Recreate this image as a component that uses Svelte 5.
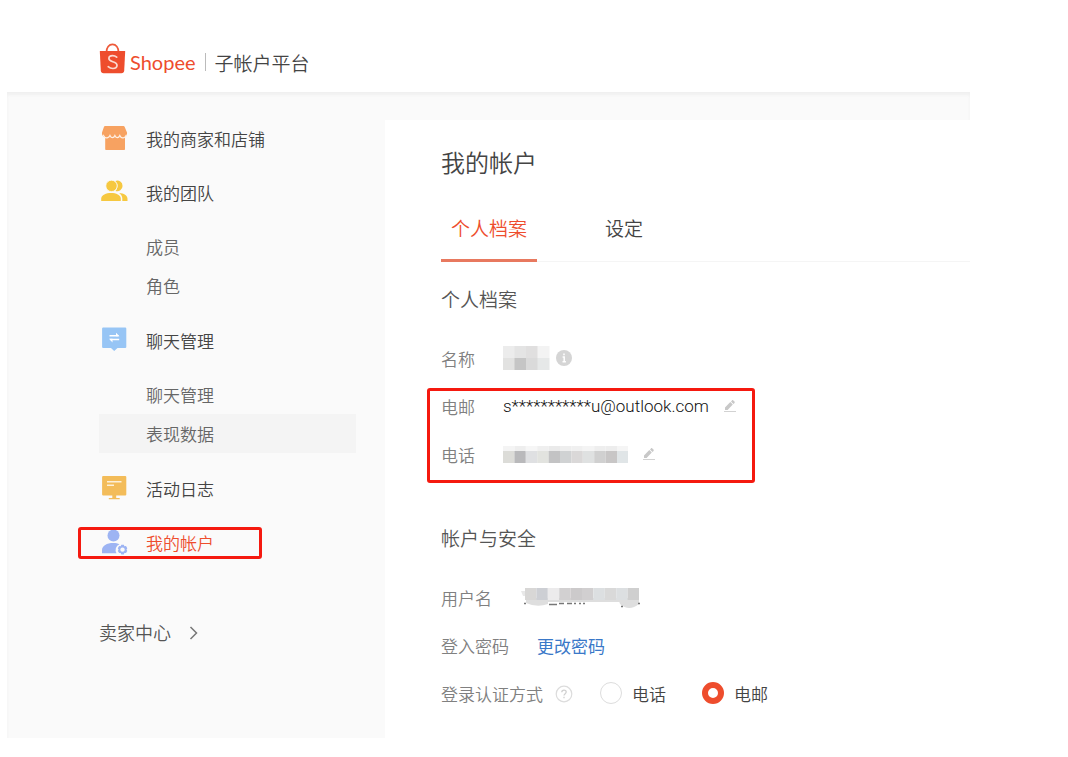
<script>
  const nav = [
    { label: '我的商家和店铺', icon: 'store', subs: [] },
    { label: '我的团队', icon: 'team', subs: [{ label: '成员' }, { label: '角色' }] },
    { label: '聊天管理', icon: 'chat', subs: [{ label: '聊天管理' }, { label: '表现数据', hover: true }] },
    { label: '活动日志', icon: 'log', subs: [] },
    { label: '我的帐户', icon: 'account', active: true, subs: [] },
  ];

  const nameMask = [
    ['#ececec', '#e4e4e4', '#e0dfdf', '#f3f3f3'],
    ['#e2e2e1', '#c5c5c5', '#dadada', '#e6e8e8'],
  ];
  const phoneTop = ['#f4f4f4', '#eeeeee', '#f6f6f6', '#efefef', '#eaeaea', '#eeeeee', '#f0f0f0', '#f4f4f4', '#eeeeee', '#ededed', '#f5f5f5'];
  const phoneRow = ['#dcdcd8', '#b9b9bb', '#dfe0e2', '#e2e3df', '#c3c3c4', '#d0d2d3', '#dad8d8', '#dfe1e1', '#d0d0d0', '#c8c6c6', '#e0e5e7'];
  const userRow = ['#d8d7d6', '#cdcfd4', '#ecebec', '#d2d0d1', '#cccacb', '#d1cfd0', '#dcdfe1', '#d9d9d9', '#dcdfe1', '#cfcfcf'];

  let tab = $state('profile');
  let method = $state('email');
</script>

{#snippet pencil()}
  <svg width="14" height="14" viewBox="0 0 14 14" aria-hidden="true">
    <path d="M2 11V8.400L7.300 3.100l2.500 2.500L4.600 11zM8 2.400l1-1c.4-.4.9-.4 1.300 0l1.200 1.200c.4.4.4.9 0 1.300l-1 1z" fill="#c8c8c8" />
    <path d="M1 12.500h12" stroke="#d2d2d2" stroke-width="1" />
  </svg>
{/snippet}

<div class="page">
  <header>
    <svg class="bag" width="27" height="31" viewBox="0 0 27 31" aria-hidden="true">
      <path d="M7.500 9C7.500 4.500 10 1.300 13.500 1.300S19.500 4.500 19.500 9" fill="none" stroke="#ee5a3a" stroke-width="1.700" />
      <path d="M.8 8h25.400L25.200 27.600q-.2 2.600-2.800 2.600H4.600Q2 30.200 1.800 27.600z" fill="#ee4d2d" />
      <path d="M17.700 14.200c-1.200-1-2.600-1.500-4.100-1.500-2.200 0-3.700 1.100-3.700 2.800 0 4 8.100 2.400 8.100 6.800 0 2-1.700 3.200-4.100 3.200-1.900 0-3.500-.7-4.700-1.800" fill="none" stroke="#fbd9d0" stroke-width="1.700" stroke-linecap="round" />
    </svg>
    <span class="brand">Shopee</span>
    <span class="bar"></span>
    <span class="platform">子帐户平台</span>
  </header>

  <div class="body">
    <nav>
      {#each nav as item}
        <div class="group">
          <a href="#top" class="item" class:active={item.active}>
            <span class="icon">
              {#if item.icon === 'store'}
                <svg width="28" height="28" viewBox="0 0 28 28">
                  <path d="M5 2h18.500q.8 0 1.200.9L27 8.600q.4 3.800-2 4.200v12.400q0 .8-.8.8H6q-.8 0-.8-.8V13Q1.400 12.500 2 8.600L4 2.800Q4.300 2 5 2z" fill="#f7a261" />
                  <path d="M3 10.800q1.900 3.600 4.200 3.100 2-.4 2.800-2.400 1 2.200 2.500 2.200t2.400-2.200q1 2.200 2.500 2.200t2.400-2.200q.9 2.300 2.800 2.400 2.400.2 4-3.100" fill="none" stroke="#fef0e5" stroke-width="1.200" />
                </svg>
              {:else if item.icon === 'team'}
                <svg width="28" height="28" viewBox="0 0 28 28" fill="#f6c840">
                  <path d="M15.500 2.900a5.300 5.300 0 1 1 0 10 8 8 0 0 0 0-10zM19.200 14.900c4.600.2 8.300 2.400 8.300 5.800v2.300h-5.200v-2.500c0-2.300-1.200-4.200-3.100-5.600z" />
                  <circle cx="11.500" cy="7.900" r="5.700" stroke="#fafafa" stroke-width=".8" />
                  <path d="M1.200 23v-2.500c0-3.600 5-5.600 9.900-5.600s9.700 2 9.700 5.600V23z" />
                </svg>
              {:else if item.icon === 'chat'}
                <svg width="28" height="28" viewBox="0 0 28 28">
                  <path d="M3.200 1.500h22q1.100 0 1.100 1.100v18.300q0 1.100-1.100 1.100H17.500L14.200 25 11 22H3.200q-1.100 0-1.100-1.100V2.600q0-1.100 1.100-1.100z" fill="#97c5f5" />
                  <path d="M9.500 9.700h9M19.200 13.500h-9" stroke="#fff" stroke-width="1.400" />
                  <path d="M16 6.800l3.500 3.500H16zM12.500 12.800v3.600L9 12.800z" fill="#fff" />
                </svg>
              {:else if item.icon === 'log'}
                <svg width="28" height="28" viewBox="0 0 28 28">
                  <path d="M3.200 2h22q1.100 0 1.100 1.100v17.300q0 1.100-1.100 1.100h-9V24h3.500v1.300H8.800V24h3.500v-2.500H3.200q-1.100 0-1.100-1.100V3.100Q2.100 2 3.200 2z" fill="#f3bc59" />
                  <path d="M7 7.700h14.500M7 11.300h7" stroke="#fdf0d8" stroke-width="1.400" />
                </svg>
              {:else}
                <svg width="28" height="28" viewBox="0 0 28 28" fill="#9db4f3">
                  <circle cx="13.500" cy="7.500" r="6" />
                  <path d="M2 25.300v-3c0-4.500 4.800-7.200 11.300-7.200 2.400 0 4.500.4 6.200 1.100a6.300 6.300 0 0 0-3 9.100z" />
                  <path fill-rule="evenodd" d="M21.300 16.800h2.500l.6 1.500 1.600-.2 1.300 2.100-.8 1.400.8 1.400-1.300 2.100-1.600-.2-.6 1.500h-2.500l-.6-1.500-1.600.2-1.300-2.100.8-1.400-.8-1.400 1.300-2.100 1.600.2zm1.200 2.600a2.200 2.200 0 1 0 .01 0z" />
                </svg>
              {/if}
            </span>
            {item.label}
          </a>
          {#if item.subs.length}
            <div class="subs">
              {#each item.subs as sub}
                <a href="#top" class="sub" class:hover={sub.hover}>{sub.label}</a>
              {/each}
            </div>
          {/if}
        </div>
      {/each}
      <a href="#top" class="seller">
        卖家中心
        <svg width="10" height="16" viewBox="0 0 10 16" aria-hidden="true"><path d="M1.500 3l6 6-6 6" fill="none" stroke="#777" stroke-width="1.500" /></svg>
      </a>
    </nav>

    <main>
      <h1>我的帐户</h1>
      <div class="tabs" role="tablist">
        <button role="tab" aria-selected={tab === 'profile'} class:on={tab === 'profile'} onclick={() => (tab = 'profile')}>个人档案</button>
        <button role="tab" aria-selected={tab === 'settings'} class:on={tab === 'settings'} onclick={() => (tab = 'settings')}>设定</button>
      </div>

      <h2>个人档案</h2>
      <div class="row">
        <span class="label">名称</span>
        <svg width="47" height="24" viewBox="0 0 47 24" aria-hidden="true">
          {#each nameMask as line, r}
            {#each line as c, i}<rect x={i * 11.5} y={r * 12} width="12" height="12" fill={c} />{/each}
          {/each}
        </svg>
        <svg class="info" width="16" height="16" viewBox="0 0 16 16" aria-hidden="true">
          <circle cx="8" cy="8" r="8" fill="#d5d5d5" />
          <path d="M8 3.500v1.800M6.600 7H8.200v4.500M6.500 11.700h3.400" fill="none" stroke="#fff" stroke-width="1.500" />
        </svg>
      </div>
      <div class="marked">
        <div class="row">
          <span class="label">电邮</span>
          <span class="value">s***********u@outlook.com</span>
          <button class="edit" aria-label="电邮">{@render pencil()}</button>
        </div>
        <div class="row">
          <span class="label">电话</span>
          <svg width="125" height="17" viewBox="0 0 125 17" aria-hidden="true">
            {#each phoneRow as c, i}
              <rect x={i * 11.4} y="0" width="11.4" height="6" fill={phoneTop[i]} />
              <rect x={i * 11.4} y="5" width="11.4" height="12" fill={c} />
            {/each}
          </svg>
          <button class="edit" aria-label="电话">{@render pencil()}</button>
        </div>
      </div>

      <h2 class="second">帐户与安全</h2>
      <div class="row">
        <span class="label">用户名</span>
        <svg width="122" height="22" viewBox="0 0 122 22" aria-hidden="true">
          <path d="M1 5h4v5H3z" fill="#e8e8e8" />
          <path d="M6 12h22v6q-11 4-22-1zM28 12h72v4H28zM98 12h21v6q-10 8-19 0z" fill="#dedede" />
          {#each userRow as c, i}<rect x={5 + i * 11.4} y="2" width="11.4" height="12" fill={c} />{/each}
          <path d="M4 17.500h2M29 18.500h8M39 17.500h5M47 17.500h5M54 17.500h2M59 17.500h2M63 17.500h2M101 20.500h2M118 17.500h2" stroke="#777" stroke-width="1.300" />
        </svg>
      </div>
      <div class="row">
        <span class="label">登入密码</span>
        <a href="#top" class="link">更改密码</a>
      </div>
      <div class="row" role="radiogroup" aria-labelledby="method-label">
        <span class="label" id="method-label">登录认证方式</span>
        <svg class="help" width="18" height="18" viewBox="0 0 18 18" aria-hidden="true">
          <circle cx="9" cy="9" r="7.800" fill="none" stroke="#dcdcdc" stroke-width="1.200" />
          <path d="M6.800 7.300c0-1.400 1-2.200 2.200-2.200s2.200.8 2.200 2c0 1.500-2.200 1.700-2.200 3.500M9 11.800v1.500" fill="none" stroke="#d0d0d0" stroke-width="1.300" />
        </svg>
        <label class="radio"><input type="radio" name="method" value="phone" bind:group={method} />电话</label>
        <label class="radio"><input type="radio" name="method" value="email" bind:group={method} />电邮</label>
      </div>
    </main>
  </div>
</div>

<style>
  :global(body) {
    margin: 0;
    background: #fff;
  }
  .page {
    margin: 0 98px 0 7px;
    font-family: Roboto, 'Noto Sans CJK SC', sans-serif;
    font-weight: 350;
    font-size: 17px;
    color: #444;
  }
  a {
    color: inherit;
    text-decoration: none;
  }
  header {
    display: flex;
    align-items: center;
    box-sizing: border-box;
    height: 92px;
    padding: 32px 0 0 92px;
  }
  .bag {
    margin-bottom: 8px;
  }
  .brand {
    margin-left: 4px;
    font-family: Lato, sans-serif;
    font-weight: 400;
    font-size: 20px;
    color: #ee4d2d;
  }
  .bar {
    width: 1px;
    height: 18px;
    margin: 0 9px;
    background: #bbb;
  }
  .platform {
    font-size: 19px;
  }
  .body {
    display: flex;
    background: #fafafa;
    box-shadow: inset 0 3px 3px #f0f0f0;
  }
  nav {
    box-sizing: border-box;
    flex: 0 0 378px;
    padding: 27px 29px 0 92px;
  }
  .group {
    margin-bottom: 16px;
  }
  .item {
    position: relative;
    display: flex;
    align-items: center;
    gap: 18px;
    height: 38px;
  }
  .icon,
  .icon svg {
    display: block;
  }
  .icon {
    width: 28px;
    height: 28px;
    margin-left: 1px;
  }
  .active {
    color: #ee4d2d;
  }
  .active::after {
    content: '';
    position: absolute;
    left: -21px;
    top: 4px;
    width: 178px;
    height: 26px;
    border: 3px solid #f5190f;
    border-radius: 3px;
  }
  .subs {
    margin-top: 16px;
  }
  .sub {
    display: flex;
    align-items: center;
    height: 39px;
    padding-left: 47px;
    color: #666;
  }
  .hover {
    background: #f4f4f4;
  }
  .seller {
    display: flex;
    align-items: center;
    gap: 18px;
    margin-top: 52px;
    height: 38px;
    font-size: 18px;
    color: #555;
  }
  main {
    flex: 1;
    min-width: 0;
    margin-top: 28px;
    padding: 25px 0 21px 56px;
    background: #fff;
  }
  h1,
  h2 {
    margin: 0;
    font-weight: 350;
    line-height: 38px;
  }
  h1 {
    font-size: 24px;
  }
  h2 {
    margin: 20px 0 14px;
    font-size: 19px;
    color: #555;
  }
  .second {
    margin-top: 43px;
  }
  .tabs {
    display: flex;
    gap: 58px;
    margin-top: 13px;
    box-shadow: inset 0 -1px #f5f5f5;
  }
  .tabs button {
    box-sizing: border-box;
    height: 66px;
    padding: 0 10px;
    border: 0;
    border-bottom: 3px solid transparent;
    background: none;
    font: inherit;
    font-size: 19px;
    color: inherit;
  }
  .tabs .on {
    color: #ee4d2d;
    border-color: #e8795f;
  }
  .row {
    display: flex;
    align-items: center;
    height: 48px;
  }
  .label {
    margin-right: 28px;
    color: #808080;
  }
  .value {
    color: #111;
  }
  .marked {
    position: relative;
  }
  .marked::after {
    content: '';
    position: absolute;
    left: -14px;
    top: 6px;
    width: 322px;
    height: 89px;
    border: 3px solid #f5190f;
    border-radius: 3px;
    pointer-events: none;
  }
  .edit {
    margin-left: 14px;
    padding: 0;
    border: 0;
    background: none;
    line-height: 0;
  }
  .info {
    margin-left: 6px;
  }
  .link {
    color: #3a78c8;
    font-weight: 400;
  }
  .help {
    margin: 2px 27px 0 -16px;
  }
  .radio {
    display: flex;
    align-items: center;
    gap: 10px;
    margin-right: 36px;
  }
  .radio input {
    appearance: none;
    box-sizing: border-box;
    width: 22px;
    height: 22px;
    margin: 0;
    border: 1px solid #ddd;
    border-radius: 50%;
    background: #fff;
  }
  .radio input:checked {
    border: 6px solid #ee4d2d;
  }
</style>
